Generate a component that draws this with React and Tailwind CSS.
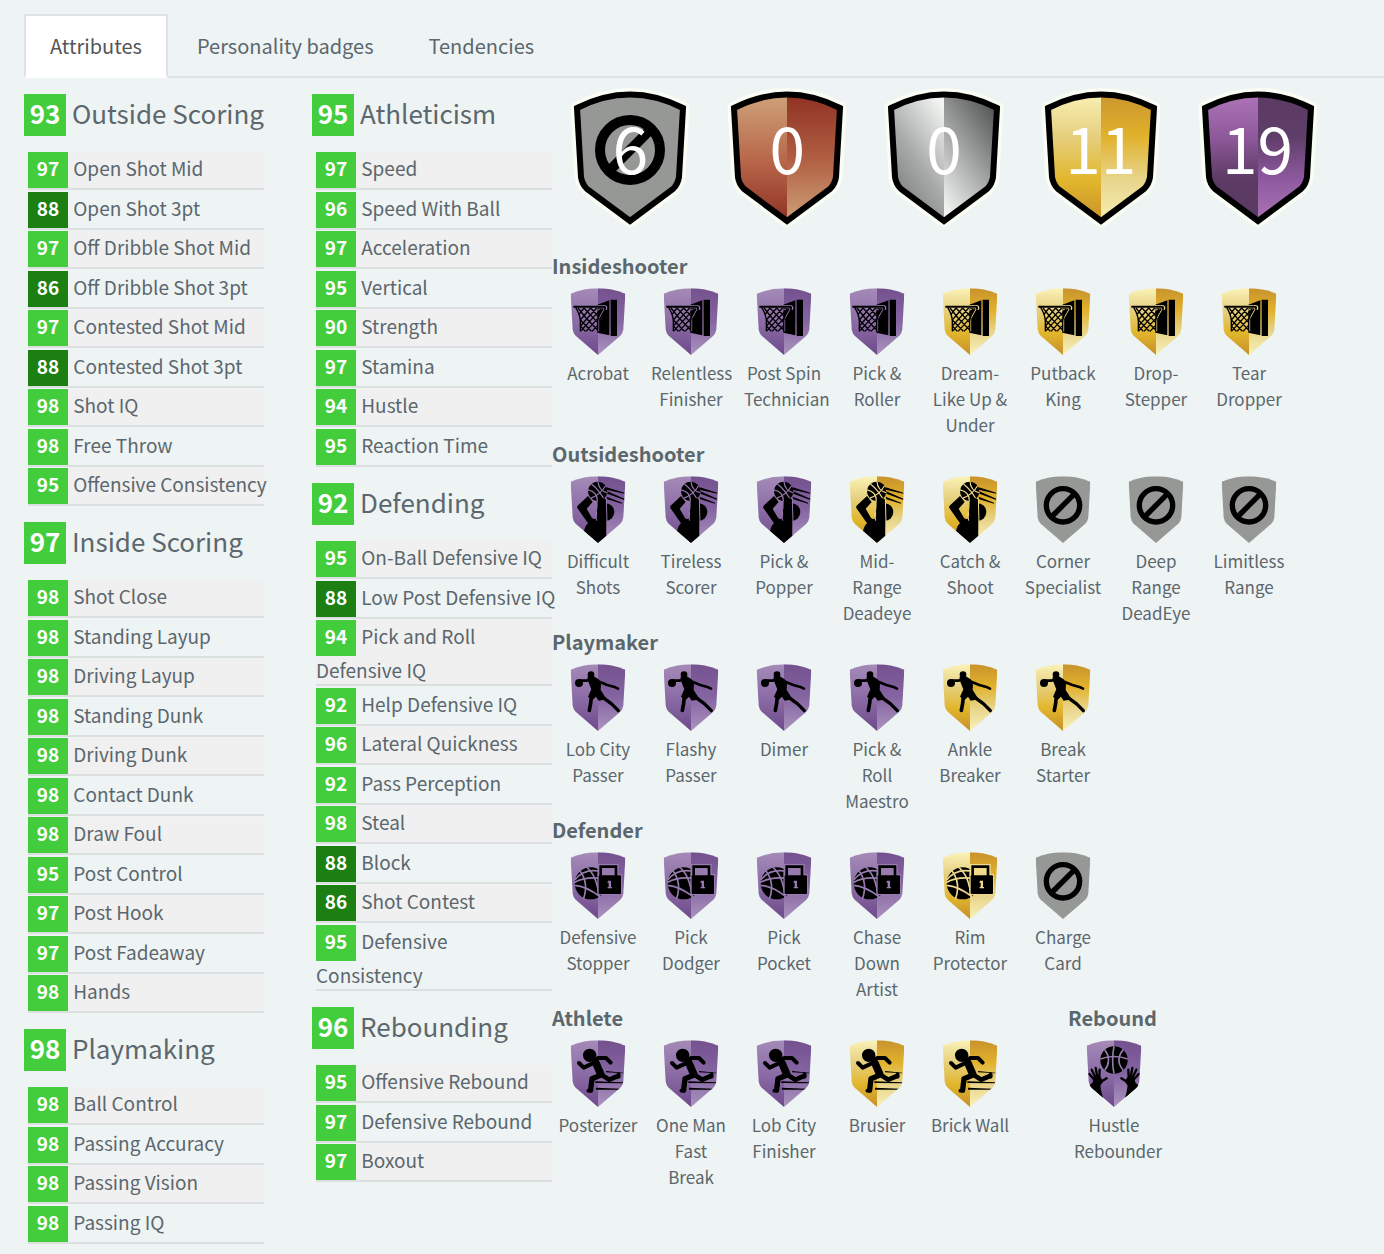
import React, { useState } from 'react';

const tabs = ['Attributes', 'Personality badges', 'Tendencies'];

const leftColumn = [
  {
    name: 'Outside Scoring',
    score: 93,
    items: [
      ['Open Shot Mid', 97],
      ['Open Shot 3pt', 88],
      ['Off Dribble Shot Mid', 97],
      ['Off Dribble Shot 3pt', 86],
      ['Contested Shot Mid', 97],
      ['Contested Shot 3pt', 88],
      ['Shot IQ', 98],
      ['Free Throw', 98],
      ['Offensive Consistency', 95],
    ],
  },
  {
    name: 'Inside Scoring',
    score: 97,
    items: [
      ['Shot Close', 98],
      ['Standing Layup', 98],
      ['Driving Layup', 98],
      ['Standing Dunk', 98],
      ['Driving Dunk', 98],
      ['Contact Dunk', 98],
      ['Draw Foul', 98],
      ['Post Control', 95],
      ['Post Hook', 97],
      ['Post Fadeaway', 97],
      ['Hands', 98],
    ],
  },
  {
    name: 'Playmaking',
    score: 98,
    items: [
      ['Ball Control', 98],
      ['Passing Accuracy', 98],
      ['Passing Vision', 98],
      ['Passing IQ', 98],
    ],
  },
];

const middleColumn = [
  {
    name: 'Athleticism',
    score: 95,
    items: [
      ['Speed', 97],
      ['Speed With Ball', 96],
      ['Acceleration', 97],
      ['Vertical', 95],
      ['Strength', 90],
      ['Stamina', 97],
      ['Hustle', 94],
      ['Reaction Time', 95],
    ],
  },
  {
    name: 'Defending',
    score: 92,
    items: [
      ['On-Ball Defensive IQ', 95],
      ['Low Post Defensive IQ', 88],
      ['Pick and Roll Defensive IQ', 94],
      ['Help Defensive IQ', 92],
      ['Lateral Quickness', 96],
      ['Pass Perception', 92],
      ['Steal', 98],
      ['Block', 88],
      ['Shot Contest', 86],
      ['Defensive Consistency', 95],
    ],
  },
  {
    name: 'Rebounding',
    score: 96,
    items: [
      ['Offensive Rebound', 95],
      ['Defensive Rebound', 97],
      ['Boxout', 97],
    ],
  },
];

const totals = [
  ['none', 6],
  ['bronze', 0],
  ['silver', 0],
  ['gold', 11],
  ['purple', 19],
];

const badgeGroups = [
  {
    name: 'Insideshooter',
    icon: 'hoop',
    badges: [
      ['Acrobat', 'purple'],
      ['Relentless Finisher', 'purple'],
      ['Post Spin Technician', 'purple'],
      ['Pick & Roller', 'purple'],
      ['Dream-Like Up & Under', 'gold'],
      ['Putback King', 'gold'],
      ['Drop-Stepper', 'gold'],
      ['Tear Dropper', 'gold'],
    ],
  },
  {
    name: 'Outsideshooter',
    icon: 'shooter',
    badges: [
      ['Difficult Shots', 'purple'],
      ['Tireless Scorer', 'purple'],
      ['Pick & Popper', 'purple'],
      ['Mid-Range Deadeye', 'gold'],
      ['Catch & Shoot', 'gold'],
      ['Corner Specialist', 'none'],
      ['Deep Range DeadEye', 'none'],
      ['Limitless Range', 'none'],
    ],
  },
  {
    name: 'Playmaker',
    icon: 'dribbler',
    badges: [
      ['Lob City Passer', 'purple'],
      ['Flashy Passer', 'purple'],
      ['Dimer', 'purple'],
      ['Pick & Roll Maestro', 'purple'],
      ['Ankle Breaker', 'gold'],
      ['Break Starter', 'gold'],
    ],
  },
  {
    name: 'Defender',
    icon: 'lock',
    badges: [
      ['Defensive Stopper', 'purple'],
      ['Pick Dodger', 'purple'],
      ['Pick Pocket', 'purple'],
      ['Chase Down Artist', 'purple'],
      ['Rim Protector', 'gold'],
      ['Charge Card', 'none'],
    ],
  },
];

const athlete = {
  name: 'Athlete',
  icon: 'runner',
  badges: [
    ['Posterizer', 'purple'],
    ['One Man Fast Break', 'purple'],
    ['Lob City Finisher', 'purple'],
    ['Brusier', 'gold'],
    ['Brick Wall', 'gold'],
  ],
};

const rebound = {
  name: 'Rebound',
  icon: 'hands',
  badges: [['Hustle Rebounder', 'purple']],
};

// left / right gradient stops of the shields
const gradients = {
  none: [['#969896', '#969896'], ['#969896', '#969896']],
  bronze: [['#cfa57c', '#b9694c', '#8d2f22'], ['#8d2f22', '#b05e42', '#cfa57c']],
  silver: [['#f2f5f2', '#a9abaa', '#6f7170'], ['#4c4e4d', '#a0a2a1', '#f2f5f2']],
  gold: [['#faf3b8', '#e6d080', '#e2b62c', '#c58f2a'], ['#c8932d', '#e0b12b', '#e8d58c', '#f8f2b8']],
  purple: [['#b077b9', '#8f5a9c', '#5b3a63', '#5b3a63'], ['#5b3a63', '#5e3d68', '#8f5aa0', '#b077b9']],
  smallPurple: [['#a58bb8', '#8c6ca6', '#6d4a8b'], ['#74508f', '#8565a1', '#ab93bf']],
};

function Gradients() {
  return (
    <svg className="absolute h-0 w-0" aria-hidden="true">
      <defs>
        {Object.entries(gradients).map(([key, sides]) =>
          sides.map((stops, side) => (
            <linearGradient
              key={key + side}
              id={`${key}-${side}`}
              x1={key === 'silver' ? 0.8 : 0}
              y1="0"
              x2={key === 'silver' ? 0.2 : 0}
              y2="1"
            >
              {stops.map((color, i) => (
                <stop key={i} offset={i / (stops.length - 1)} stopColor={color} />
              ))}
            </linearGradient>
          ))
        )}
        <clipPath id="small-shield">
          <path d="M2 17 Q84 -15 166 17 L160 124 Q159 135 151 143 L84 201 L17 143 Q9 135 8 124 Z" />
        </clipPath>
      </defs>
    </svg>
  );
}

function Ball({ cx, cy, r, line, turn }) {
  return (
    <g transform={`translate(${cx} ${cy}) rotate(${turn}) scale(${r / 50})`}>
      <circle r="50" fill="#000" />
      <g fill="none" stroke={line} strokeWidth="6">
        <path d="M0 -50 Q10 0 0 50" />
        <path d="M-50 4 Q0 22 50 4" />
        <path d="M-34 -38 Q-2 0 -34 38" />
        <path d="M34 -38 Q6 0 34 38" />
      </g>
    </g>
  );
}

function Drawing({ icon, line }) {
  switch (icon) {
    case 'hoop':
      return (
        <>
          <path d="M82 50 L118 37 V142 L82 134 Z M122 35 H141 V144 H122 Z" />
          <path d="M82 66 L103 62 Q94 78 86 92 V130" fill="none" stroke={line} strokeWidth="3" />
          <path d="M12 56 H103 Q109 56 106 64" fill="none" stroke={line} strokeWidth="10" />
          <path d="M10 56 H102 Q107 57 104 64" fill="none" stroke="#000" strokeWidth="6" />
          <path
            d="M17 58 Q31 82 31 100 V130 M99 62 Q84 82 83 100 V130 M24 60 L48 90 L83 126 M42 60 L83 104 M62 60 L84 84 M42 60 L28 78 M62 60 L31 96 M80 60 L31 114 M94 62 L31 130 M83 92 L48 130 M83 112 L66 130 M31 96 L64 130 M31 114 L46 130"
            fill="none"
            stroke="#000"
            strokeWidth="4"
          />
        </>
      );
    case 'shooter':
      return (
        <>
          <circle cx="107" cy="108" r="26" />
          <path d="M110 34 L163 50 V53 L110 41 Z M112 46 L163 68 V72 L112 53 Z M110 62 L156 80 V83 L112 70 Z" />
          <path d="M54 60 L68 78 L50 98 L66 126 Q78 136 82 116 L83 72 Q94 58 108 70 Q112 130 110 182 L84 202 L42 166 Q46 148 54 142 L22 96 Q20 90 26 86 Z" />
          <path d="M83 72 Q96 54 109 70 Q112 130 110 182" fill="none" stroke={line} strokeWidth="3" />
          <path d="M79 108 Q76 120 80 134" fill="none" stroke={line} strokeWidth="3" />
          <Ball cx={83} cy={46} r={29} line={line} turn={-40} />
          <path d="M85 74 Q96 58 106 72 V112 H85 Z" />
        </>
      );
    case 'dribbler':
      return (
        <>
          <circle cx="27" cy="57" r="12" />
          <circle cx="63" cy="32" r="10" />
          <path d="M52 40 L70 36 L86 46 L93 60 L92 78 L110 106 L86 110 L78 98 L68 108 L54 98 L64 76 L56 56 Z" />
          <g fill="none" stroke="#000" strokeLinecap="round" strokeLinejoin="round">
            <path d="M60 48 L48 50 L32 50" strokeWidth="8" />
            <path d="M84 52 L112 63 L136 70 L144 74" strokeWidth="8" />
            <path d="M64 96 L62 118 L58 139" strokeWidth="11" />
            <path d="M98 100 L124 119 L145 140" strokeWidth="10" />
          </g>
        </>
      );
    case 'lock':
      return (
        <>
          <circle cx="62" cy="94" r="48" />
          <g fill="none" stroke={line} strokeWidth="5">
            <path d="M14 84 Q42 48 92 58" />
            <path d="M12 92 Q46 72 100 80" />
            <path d="M14 100 Q48 102 90 134" />
            <path d="M28 54 Q58 92 40 142" />
            <path d="M48 44 Q82 70 88 140" />
          </g>
          <path d="M84 36 H146 V66 H156 V130 H82 V66 Z" fill={line} />
          <path d="M92 72 V44 H138 V72" fill="none" stroke="#000" strokeWidth="8" />
          <rect x="86" y="70" width="67" height="56" rx="3" />
          <path d="M114 86 H123 V105 H126 V109 H113 V105 H116 V92 H112 Z" fill={line} />
        </>
      );
    case 'runner':
      return (
        <>
          <path d="M108 93 L160 98 V100 L108 97 Z M76 124 L160 127 V130 L76 129 Z M78 143 L152 146 V149 L78 149 Z" />
          <circle cx="59" cy="46" r="20" />
          <g fill="none" stroke="#000" strokeLinecap="round" strokeLinejoin="round">
            <path d="M27 69 L41 83 L68 70 L84 54 L108 54 L122 68" strokeWidth="12" />
            <path d="M78 70 L92 102" strokeWidth="23" />
            <path d="M86 108 L66 116 L62 150" strokeWidth="16" />
            <path d="M94 104 L118 119 L144 108" strokeWidth="14" />
            <path d="M55 152 L64 152 M146 102 L146 110" strokeWidth="11" />
          </g>
        </>
      );
    case 'hands':
      return (
        <>
          <Ball cx={84} cy={60} r={41} line={line} turn={180} />
          {[0, 1].map((side) => (
            <g
              key={side}
              transform={side ? 'translate(168 0) scale(-1 1)' : undefined}
              fill="none"
              stroke="#000"
              strokeLinecap="round"
              strokeLinejoin="round"
            >
              <path d="M24 118 L10 102 M28 112 L17 89 M34 110 L29 84 M40 112 L41 89 M44 126 L62 115" strokeWidth="7" />
              <path d="M26 116 L42 114 L48 124 L40 136 L44 160 L48 172 L10 140 L22 130 Z" strokeWidth="6" fill="#000" />
            </g>
          ))}
        </>
      );
    default:
      return (
        <g fill="none" stroke="#000" strokeWidth="16">
          <circle cx="84" cy="88" r="50" />
          <path d="M49 123 L119 53" />
        </g>
      );
  }
}

function Badge({ name, level, icon }) {
  const fill = level === 'purple' ? 'smallPurple' : level;
  const line = level === 'gold' ? '#f0d98a' : '#967bae';
  return (
    <li className="w-20">
      <div className="flex h-20 justify-center pt-2">
        <svg className="h-[67px] w-14" viewBox="0 0 168 201" aria-hidden="true">
          <g clipPath="url(#small-shield)">
            <rect width="84" height="201" fill={`url(#${fill}-0)`} />
            <rect x="84" width="84" height="201" fill={`url(#${fill}-1)`} />
            <Drawing icon={level === 'none' ? 'none' : icon} line={line} />
          </g>
        </svg>
      </div>
      <p className="text-center text-[17px] leading-[26px]">{name}</p>
    </li>
  );
}

function BadgeGroup({ group }) {
  return (
    <section className="mb-0.5">
      <h3 className="text-[20px] leading-7 font-bold">{group.name}</h3>
      <ul className="flex flex-wrap gap-x-[13px] px-1.5">
        {group.badges.map(([name, level]) => (
          <Badge key={name} name={name} level={level} icon={group.icon} />
        ))}
      </ul>
    </section>
  );
}

function Total({ level, count }) {
  const shape = 'M3 17 Q56 -10 109 17 L105 86 Q104 93 99 98 L56 130 L13 98 Q8 93 7 86 Z';
  return (
    <li className="flex h-[162px] justify-center">
      <div className="relative h-[135px] w-28">
        <svg className="h-full w-full overflow-visible" viewBox="0 -1 112 135" aria-hidden="true">
          <path d={shape} fill="none" stroke="#f9fdf4" strokeWidth="13" strokeLinejoin="round" />
          <clipPath id={`total-${level}`}>
            <path d={shape} />
          </clipPath>
          <g clipPath={`url(#total-${level})`}>
            <rect width="56" height="134" fill={`url(#${level}-0)`} />
            <rect x="56" width="56" height="134" fill={`url(#${level}-1)`} />
          </g>
          <path d={shape} fill="none" stroke="#000" strokeWidth="6" />
          {level === 'none' && (
            <g fill="none" stroke="#000" strokeWidth="10">
              <circle cx="56" cy="59" r="30" />
              <path d="M35 80 L77 38" />
            </g>
          )}
        </svg>
        <span className="absolute inset-x-0 top-0 text-center text-[64px] leading-[112px] text-white">{count}</span>
      </div>
    </li>
  );
}

function AttributeGroup({ group }) {
  return (
    <section className="mb-4">
      <h2 className="mb-4 flex h-[42px] gap-1.5 text-[26px] leading-[38px] whitespace-nowrap">
        <span className="w-[42px] bg-[#43cd3d] text-center font-bold text-white">{group.score}</span>
        {group.name}
      </h2>
      <ul className="ml-1">
        {group.items.map(([name, value]) => (
          <li
            key={name}
            className="mt-0.5 border-b-2 border-[#dcdfe0] first:mt-0 odd:mt-px odd:bg-[#f0f0f0] first:odd:mt-0"
          >
            <div className="-mr-1 text-[19px] leading-7">
              <span
                className={
                  value >= 90
                    ? 'mr-px inline-block h-9 w-10 bg-[#43cd3d] text-center leading-8 font-bold text-white'
                    : 'mr-px inline-block h-9 w-10 bg-[#1b7f12] text-center leading-8 font-bold text-white'
                }
              >
                {value}
              </span>{' '}
              {name}
            </div>
          </li>
        ))}
      </ul>
    </section>
  );
}

function App() {
  const [active, setActive] = useState('Attributes');

  return (
    <div className="min-h-screen bg-[#eef3f4] pt-3.5 font-['Noto_Sans_CJK_SC',sans-serif] text-[#5b676d]">
      <Gradients />
      <nav className="ml-6 flex gap-[3px] border-b-2 border-[#dde2e5]">
        {tabs.map((tab) => (
          <button
            key={tab}
            type="button"
            onClick={() => setActive(tab)}
            className={
              tab === active
                ? '-mb-0.5 h-16 border-2 border-[#dde2e5] border-b-white bg-white px-6 text-[20px] text-[#555]'
                : '-mb-0.5 h-16 border-2 border-transparent px-6 text-[20px]'
            }
          >
            {tab}
          </button>
        ))}
      </nav>

      <main className="flex pt-3 pr-12 pl-6">
        <div className="mr-12 -mb-4 w-60 shrink-0 pt-1">
          {leftColumn.map((group) => (
            <AttributeGroup key={group.name} group={group} />
          ))}
        </div>
        <div className="w-60 shrink-0 pt-1">
          {middleColumn.map((group) => (
            <AttributeGroup key={group.name} group={group} />
          ))}
        </div>
        <div className="min-w-0 flex-1">
          <ul className="grid grid-cols-5">
            {totals.map(([level, count]) => (
              <Total key={level} level={level} count={count} />
            ))}
          </ul>
          {badgeGroups.map((group) => (
            <BadgeGroup key={group.name} group={group} />
          ))}
          <div className="flex">
            <div className="w-[516px]">
              <BadgeGroup group={athlete} />
            </div>
            <BadgeGroup group={rebound} />
          </div>
        </div>
      </main>
    </div>
  );
}

export default App;
